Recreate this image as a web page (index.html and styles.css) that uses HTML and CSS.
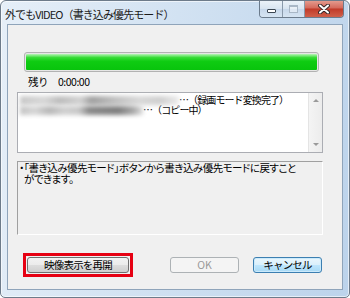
FILE: index.html
```html
<!DOCTYPE html>
<html lang="ja">
<head>
    <meta charset="UTF-8">
    <title>外でもVIDEO（書き込み優先モード）</title>
    <link rel="stylesheet" href="styles.css">
</head>
<body>
    <div class="window">
        <div class="titlebar">
            <span class="title">外でもVIDEO（書き込み優先モード）</span>
            <div class="caption-buttons">
                <span class="cap cap-min"><i></i></span>
                <span class="cap cap-max"><i></i></span>
                <span class="cap cap-close">
                    <svg width="12" height="10" viewBox="0 0 12 10">
                        <path d="M2 1.5 L10 8.5 M10 1.5 L2 8.5" stroke="#3a2a2a" stroke-width="4" stroke-linecap="round"/>
                        <path d="M2 1.5 L10 8.5 M10 1.5 L2 8.5" stroke="#fff" stroke-width="2" stroke-linecap="round"/>
                    </svg>
                </span>
            </div>
        </div>

        <div class="client">
            <div class="progress"><div class="progress-fill"></div></div>

            <div class="remain">
                <span>残り</span>
                <span>0:00:00</span>
            </div>

            <div class="listbox">
                <div class="list-items">
                    <div class="list-row">
                        <span class="blur blur-long"></span>
                        <span>…（録画モード変換完了）</span>
                    </div>
                    <div class="list-row">
                        <span class="blur blur-short"></span>
                        <span>…（コピー中）</span>
                    </div>
                </div>
                <div class="scrollbar">
                    <span class="arrow arrow-up"></span>
                    <span class="arrow arrow-down"></span>
                </div>
            </div>

            <div class="info">
                <p>・「書き込み優先モード」ボタンから書き込み優先モードに戻すこと</p>
                <p class="indent">ができます。</p>
            </div>

            <div class="buttons">
                <span class="highlight"><button class="btn btn-resume">映像表示を再開</button></span>
                <button class="btn btn-ok" disabled>OK</button>
                <button class="btn btn-default">キャンセル</button>
            </div>
        </div>
    </div>
</body>
</html>
```

FILE: styles.css
```css
* {
    margin: 0;
    padding: 0;
    box-sizing: border-box;
}

body {
    background-color: #fff;
    font-family: "Noto Sans CJK JP", "Liberation Sans", sans-serif;
    font-size: 11px;
    color: #000;
}

.window {
    width: 350px;
    height: 298px;
    border: 1px solid #6d7b8a;
    border-radius: 6px 6px 5px 5px;
    background: linear-gradient(100deg, #e6eff8 0%, #d2e2f2 45%, #bcd3eb 100%);
    box-shadow: inset 0 0 0 1px rgba(255, 255, 255, 0.6);
    display: flex;
    flex-direction: column;
    overflow: hidden;
}

.titlebar {
    height: 23px;
    display: flex;
    align-items: flex-start;
}

.title {
    padding: 5px 0 0 4px;
    line-height: 16px;
    font-size: 11px;
    letter-spacing: -0.9px;
    color: #1a1a1a;
    white-space: nowrap;
}

.caption-buttons {
    margin: -1px 5px 0 auto;
    display: flex;
    height: 18px;
    border: 1px solid #6b7b8c;
    border-top: none;
    border-radius: 0 0 4px 4px;
    overflow: hidden;
}

.cap {
    display: flex;
    align-items: center;
    justify-content: center;
    height: 100%;
    background: linear-gradient(#eef4fa 0%, #d9e5f1 50%, #c6d7ea 51%, #d6e4f2 100%);
}

.cap-min {
    width: 23px;
    border-right: 1px solid #8a9aab;
    align-items: flex-end;
    padding-bottom: 4px;
}

.cap-min i {
    width: 9px;
    height: 4px;
    background-color: #fff;
    border: 1px solid #3b4652;
    border-radius: 1px;
}

.cap-max {
    width: 22px;
    border-right: 1px solid #8a9aab;
}

.cap-max i {
    width: 9px;
    height: 8px;
    border: 1px solid #a9b7c6;
    border-top-width: 2px;
    background-color: rgba(255, 255, 255, 0.4);
}

.cap-close {
    width: 38px;
    background: linear-gradient(#e6a194 0%, #d4685a 48%, #c13a28 52%, #d0604a 100%);
}

.client {
    flex: 1;
    margin: 0 6px 7px 6px;
    border: 1px solid #8fa4ba;
    background-color: #f0f0f0;
    display: flex;
    flex-direction: column;
}

.progress {
    margin: 27px 23px 0 16px;
    height: 20px;
    border: 1px solid #b2b2b2;
    border-radius: 3px;
    background-color: #e6e6e6;
    padding: 1px;
}

.progress-fill {
    height: 100%;
    border-radius: 1px;
    background: linear-gradient(#b8f5b8 0%, #38dc38 22%, #0fcc12 45%, #08c40c 100%);
}

.remain {
    margin-top: 3px;
    padding-left: 20px;
    line-height: 14px;
    font-size: 10.5px;
    display: flex;
    gap: 10px;
    letter-spacing: -0.5px;
}

.listbox {
    margin: 3px 0 0 9px;
    width: 306px;
    height: 61px;
    border: 1px solid #abadb3;
    background-color: #fff;
    display: flex;
}

.list-items {
    flex: 1;
    padding: 2px 0 0 2px;
    font-size: 10px;
    line-height: 10px;
    letter-spacing: -0.9px;
    white-space: nowrap;
}

.list-row {
    display: flex;
    align-items: center;
    height: 10px;
}

.blur {
    display: block;
    height: 9px;
    filter: blur(2px);
}

.blur-long {
    width: 159px;
    background: linear-gradient(90deg, #c8c8c8 0%, #d8d8d8 15%, #bdbdbd 25%, #d2d2d2 38%, #a0a0a0 45%, #c0c0c0 60%, #d8d8d8 75%, #cfcfcf 88%, #ebebeb 100%);
}

.blur-short {
    width: 123px;
    background: linear-gradient(90deg, #c4c4c4 0%, #d6d6d6 12%, #b8b8b8 24%, #d0d0d0 36%, #c8c8c8 48%, #8a8a8a 56%, #7e7e7e 80%, #a8a8a8 92%, #e0e0e0 100%);
}

.scrollbar {
    width: 14px;
    border-left: 1px solid #e4e4e4;
    background: linear-gradient(90deg, #f4f4f4, #ececec);
    display: flex;
    flex-direction: column;
    justify-content: space-between;
    align-items: center;
    padding: 6px 0 6px;
}

.arrow {
    width: 0;
    height: 0;
    border-left: 3px solid transparent;
    border-right: 3px solid transparent;
}

.arrow-up {
    border-bottom: 3px solid #9a9a9a;
}

.arrow-down {
    border-top: 3px solid #9a9a9a;
}

.info {
    margin: 8px 0 0 9px;
    width: 306px;
    height: 74px;
    border: 1px solid #ffffff;
    border-top-color: #a0a0a0;
    border-left-color: #a0a0a0;
    padding: 0 0 0 1px;
    font-size: 10.5px;
    line-height: 11px;
    letter-spacing: -0.5px;
    font-feature-settings: "palt";
    white-space: nowrap;
}

.indent {
    padding-left: 5px;
}

.buttons {
    margin: 18px 0 0 15px;
    display: flex;
    align-items: center;
}

.highlight {
    display: block;
    border: 3px solid #e60012;
    padding: 1px;
}

.btn {
    height: 16px;
    width: 69px;
    border: 1px solid #707070;
    border-radius: 3px;
    background: linear-gradient(#f2f2f2 0%, #ebebeb 50%, #dddddd 51%, #cfcfcf 100%);
    font-family: "Noto Sans CJK JP", "Liberation Sans", sans-serif;
    font-size: 10.5px;
    letter-spacing: -0.8px;
    color: #000;
    line-height: 14px;
}

.btn-resume {
    display: block;
    width: 102px;
}

.btn-ok {
    margin-left: 37px;
    border-color: #adb2b5;
    background: #f4f4f4;
    color: #9a9a9a;
    letter-spacing: 0;
}

.btn-default {
    margin-left: 14px;
    border-color: #3c7fb1;
    background: linear-gradient(#eaf6fd 0%, #d9f0fc 50%, #bee6fd 51%, #a7d9f5 100%);
    box-shadow: inset 0 0 0 1px #cbeafb;
}
```
